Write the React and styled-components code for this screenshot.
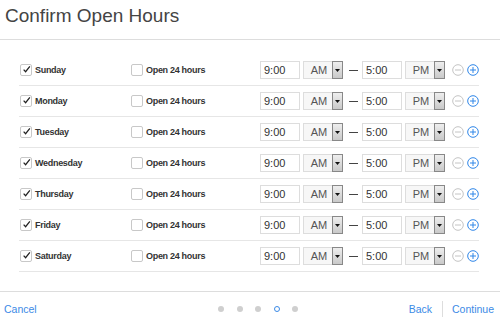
import React, { useState } from 'react';
import styled, { createGlobalStyle } from 'styled-components';

const days = ['Sunday', 'Monday', 'Tuesday', 'Wednesday', 'Thursday', 'Friday', 'Saturday'];

const GlobalStyle = createGlobalStyle`
  html, body {
    margin: 0;
    padding: 0;
    background: #fff;
    font-family: "Liberation Sans", Arial, sans-serif;
    color: #333;
  }
`;

export default function App() {
  const [checked] = useState(days.map(() => true));

  return (
    <Page>
      <GlobalStyle />
      <Header>
        <Title>Confirm Open Hours</Title>
      </Header>

      <List>
        {days.map((day, i) => (
          <Row key={day}>
            <DayCell>
              <Box>{checked[i] && <CheckMark />}</Box>
              <DayLabel>{day}</DayLabel>
            </DayCell>
            <AllDayCell>
              <Box />
              <DayLabel>Open 24 hours</DayLabel>
            </AllDayCell>
            <Times>
              <TimeInput>9:00</TimeInput>
              <Select>
                <SelectText>AM</SelectText>
                <SelectArrow><Caret /></SelectArrow>
              </Select>
              <Dash />
              <TimeInput>5:00</TimeInput>
              <Select>
                <SelectText>PM</SelectText>
                <SelectArrow><Caret /></SelectArrow>
              </Select>
              <Actions>
                <CircleIcon color="#c4c4c4" />
                <CircleIcon color="#2f86e8" plus />
              </Actions>
            </Times>
          </Row>
        ))}
      </List>

      <Footer>
        <LinkText>Cancel</LinkText>
        <Dots>
          {[0, 1, 2, 3, 4].map((d) => (
            <Dot key={d} active={d === 3} />
          ))}
        </Dots>
        <NavRight>
          <LinkText>Back</LinkText>
          <Sep />
          <LinkText>Continue</LinkText>
        </NavRight>
      </Footer>
    </Page>
  );
}

const CheckMark = () => (
  <svg width="11" height="11" viewBox="0 0 11 11">
    <path d="M2 5.6 L4.4 8.2 L9.6 1.6" fill="none" stroke="#222" strokeWidth="1.5" />
  </svg>
);

const Caret = () => (
  <svg width="5" height="3" viewBox="0 0 5 3">
    <path d="M0 0 H5 L2.5 3 Z" fill="#111" />
  </svg>
);

const CircleIcon = ({ color, plus }) => (
  <svg width="12" height="12" viewBox="0 0 12 12">
    <circle cx="6" cy="6" r="5.3" fill="none" stroke={color} strokeWidth="1" />
    <path d="M3 6 H9" stroke={color} strokeWidth="1" />
    {plus && <path d="M6 3 V9" stroke={color} strokeWidth="1" />}
  </svg>
);

// Styled Components
const Page = styled.div`
  width: 500px;
  height: 317px;
  display: flex;
  flex-direction: column;
  overflow: hidden;
`;

const Header = styled.div`
  flex-shrink: 0;
  height: 39px;
  border-bottom: 1px solid #ddd;
  padding-left: 5px;
`;

const Title = styled.h1`
  margin: 0;
  padding-top: 4px;
  font-size: 19px;
  line-height: 23px;
  font-weight: 400;
  color: #444;
`;

const List = styled.div`
  flex-shrink: 0;
  padding: 15px 21px 0 19px;
`;

const Row = styled.div`
  height: 30px;
  border-bottom: 1px solid #e6e6e6;
  display: flex;
  align-items: center;
`;

const DayCell = styled.div`
  flex: 0 0 112px;
  box-sizing: border-box;
  display: flex;
  align-items: center;
  padding-left: 1px;
`;

const AllDayCell = styled.div`
  flex: 0 0 129px;
  display: flex;
  align-items: center;
`;

const Box = styled.span`
  flex-shrink: 0;
  width: 10px;
  height: 10px;
  border: 1px solid #c8c8c8;
  border-radius: 2px;
  display: inline-flex;
  align-items: center;
  justify-content: center;
  background: #fff;
  margin-right: 3px;
  svg {
    margin-top: -2px;
    margin-left: 1px;
  }
`;

const DayLabel = styled.span`
  font-size: 9px;
  letter-spacing: -0.3px;
  font-weight: 700;
  color: #333;
`;

const Times = styled.div`
  flex-shrink: 0;
  display: flex;
  align-items: center;
`;

const TimeInput = styled.div`
  width: 35px;
  height: 16px;
  border: 1px solid #ddd;
  padding-left: 3px;
  font-size: 11px;
  line-height: 16px;
  color: #333;
  margin-right: 3px;
`;

const Select = styled.div`
  width: 40px;
  height: 18px;
  border: 1px solid #ddd;
  box-sizing: border-box;
  display: flex;
  background: #f7f7f7;
`;

const SelectText = styled.span`
  flex: 1;
  font-size: 11px;
  line-height: 16px;
  text-align: center;
  color: #555;
  padding-left: 2px;
`;

const SelectArrow = styled.span`
  width: 9px;
  border: 1px solid #888;
  margin: -1px -1px -1px 0;
  background: linear-gradient(#eee, #c9c9c9);
  display: flex;
  align-items: center;
  justify-content: center;
`;

const Dash = styled.span`
  width: 9px;
  height: 1px;
  background: #444;
  margin: 0 4px 0 6px;
`;

const Actions = styled.div`
  display: flex;
  gap: 3px;
  margin-left: 7px;
`;

const Footer = styled.div`
  border-top: 1px solid #ddd;
  margin-top: 19px;
  flex: 1;
  display: flex;
  align-items: center;
  padding: 8px 6px 0 4px;
  position: relative;
`;

const LinkText = styled.span`
  font-size: 10.5px;
  color: #3b8ae6;
`;

const Dots = styled.div`
  position: absolute;
  left: 218px;
  top: 14px;
  display: flex;
  gap: 12.5px;
`;

const Dot = styled.span`
  width: 6px;
  height: 6px;
  border-radius: 50%;
  box-sizing: border-box;
  background: ${(p) => (p.active ? 'transparent' : '#cfcfcf')};
  border: ${(p) => (p.active ? '1px solid #3b8ae6' : 'none')};
`;

const NavRight = styled.div`
  margin-left: auto;
  display: flex;
  align-items: center;
`;

const Sep = styled.span`
  width: 1px;
  height: 16px;
  background: #ddd;
  margin: 0 9px 0 10px;
`;
